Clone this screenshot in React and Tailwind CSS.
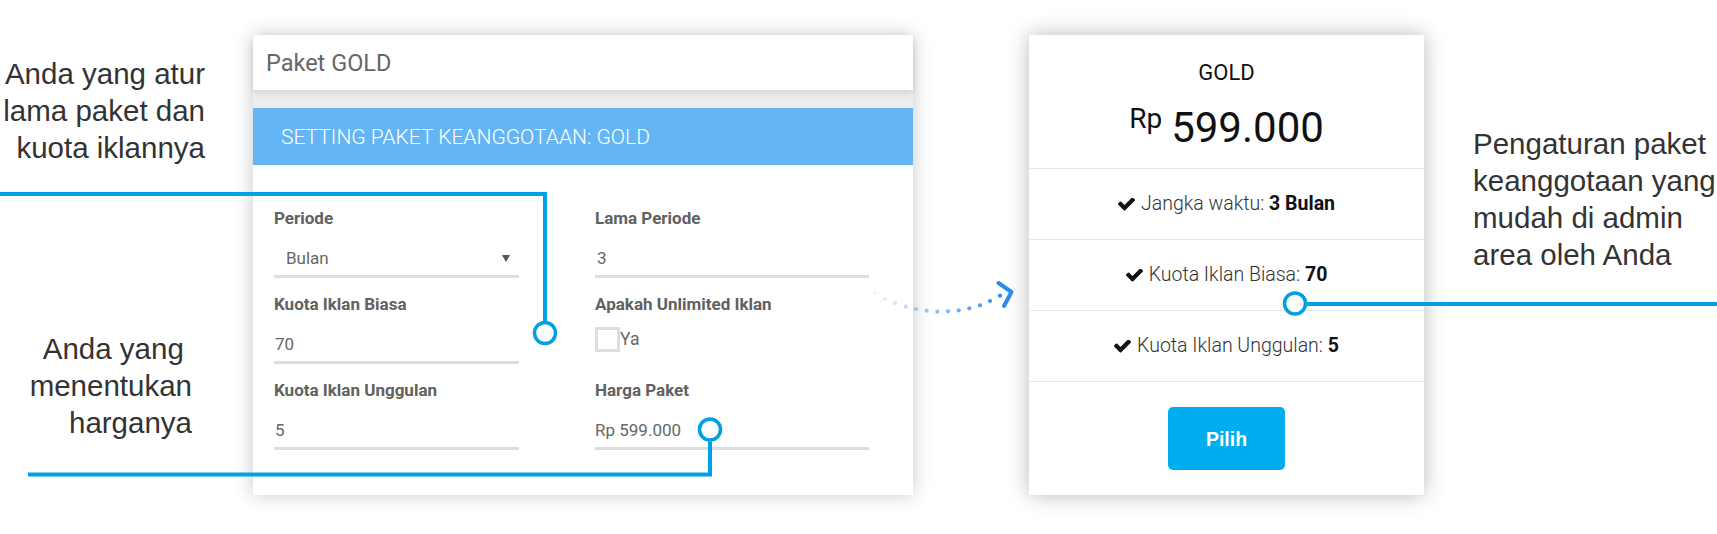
const lineBlue = '#00a0e6'
const arrowBlue = '#2a8cf0'

const arrowDots = [
  [875, 293.3], [885, 299], [895, 303], [905.7, 306.7], [916, 309], [926.7, 310.7],
  [937.3, 311.7], [948, 311.3], [958.7, 310.3], [969.3, 308.3], [980, 305.3], [990, 301], [1000, 295.7],
]

function Connectors() {
  return (
    <svg
      className="pointer-events-none absolute left-0 top-0"
      width="1717"
      height="534"
      viewBox="0 0 1717 534"
      fill="none"
    >
      <path d="M0 194H545V321" stroke={lineBlue} strokeWidth="4" />
      <circle cx="545" cy="333" r="10.5" fill="white" stroke={lineBlue} strokeWidth="3.5" />
      <path d="M28 474.5H710V441.5" stroke={lineBlue} strokeWidth="4" />
      <circle cx="710" cy="429.5" r="10.5" fill="white" stroke={lineBlue} strokeWidth="3.5" />
      <path d="M1307 304H1717" stroke={lineBlue} strokeWidth="4" />
      <circle cx="1295" cy="303.5" r="10.5" fill="white" stroke={lineBlue} strokeWidth="3.5" />
      {arrowDots.map(([x, y], i) => (
        <circle
          key={i}
          cx={x}
          cy={y}
          r="2.1"
          fill={arrowBlue}
          opacity={0.08 + (0.92 * i) / (arrowDots.length - 1)}
        />
      ))}
      <path
        d="M998.5 283L1011.5 292L1004 306"
        stroke={arrowBlue}
        strokeWidth="4"
        strokeLinecap="round"
        strokeLinejoin="round"
      />
    </svg>
  )
}

function CheckIcon() {
  return (
    <svg width="17" height="13" viewBox="121 410 1550 1130" className="shrink-0">
      <path
        fill="#111"
        d="M1671 566q0 40-28 68l-724 724-136 136q-28 28-68 28t-68-28l-136-136-362-362q-28-28-28-68t28-68l136-136q28-28 68-28t68 28l294 295 656-657q28-28 68-28t68 28l136 136q28 28 28 68z"
      />
    </svg>
  )
}

function Field({ label, children }) {
  return (
    <div className="mb-[16px] flex flex-col">
      <div className="h-[20px] text-[17px] font-bold leading-[20px] text-[#616161]">{label}</div>
      <div className="mt-[18px] h-[24px] text-[17px] leading-[24px] text-[#666]">{children}</div>
      <div className="mt-[5px] h-[3px] bg-[#dddddd]" />
    </div>
  )
}

function Feature({ label, value }) {
  return (
    <div className="flex h-[71px] items-center justify-center gap-[6px] border-b border-[#e8e8e8] text-[19.5px] font-light leading-[24px] text-[#333]">
      <CheckIcon />
      <span>
        {label} <span className="font-bold text-[#111]">{value}</span>
      </span>
    </div>
  )
}

function SettingsPanel() {
  return (
    <div className="mt-[35px] flex h-[460px] w-[660px] shrink-0 flex-col bg-[#eeeeee] font-[Roboto,sans-serif] shadow-[0_0_18px_rgba(0,0,0,0.22)]">
      <div className="relative z-10 flex h-[55px] items-center rounded-t-[2px] bg-white pl-[13px] text-[23.5px] leading-[28px] text-[#666] shadow-[0_3px_6px_rgba(0,0,0,0.12)]">
        Paket GOLD
      </div>
      <div className="h-[18px]" />
      <div className="flex h-[57px] items-center bg-[#64b5f6] pl-[28px] text-[21px] font-light leading-[26px] text-white">
        SETTING PAKET KEANGGOTAAN: GOLD
      </div>
      <div className="flex-1 bg-white pl-[21px] pt-[43px]">
        <div className="grid grid-cols-[245px_274px] gap-x-[76px]">
          <Field label="Periode">
            <div className="flex items-center justify-between pl-[12px] pr-[9px]">
              <span>Bulan</span>
              <svg width="8" height="7" viewBox="0 0 8 7">
                <path d="M0 0H8L4 7Z" fill="#555" />
              </svg>
            </div>
          </Field>
          <Field label="Lama Periode">
            <span className="pl-[2px]">3</span>
          </Field>
          <Field label="Kuota Iklan Biasa">
            <span className="pl-[1px]">70</span>
          </Field>
          <div className="mb-[16px] flex flex-col">
            <div className="h-[20px] text-[17px] font-bold leading-[20px] text-[#616161]">
              Apakah Unlimited Iklan
            </div>
            <div className="mt-[13px] flex h-[25px] items-center leading-[25px]">
              <div className="h-[25px] w-[25px] border-[3px] border-[#dddddd] bg-white" />
              <span className="text-[17.5px] text-[#666]">Ya</span>
            </div>
          </div>
          <Field label="Kuota Iklan Unggulan">
            <span className="pl-[1px]">5</span>
          </Field>
          <Field label="Harga Paket">Rp 599.000</Field>
        </div>
      </div>
    </div>
  )
}

function PriceCard() {
  return (
    <div className="ml-[116px] mt-[35px] flex h-[460px] w-[395px] shrink-0 flex-col bg-white font-[Roboto,sans-serif] shadow-[0_0_20px_rgba(0,0,0,0.28)]">
      <div className="flex h-[134px] flex-col items-center border-b border-[#e8e8e8] pt-[24.5px]">
        <div className="h-[26px] text-[22px] leading-[26px] text-[#111]">GOLD</div>
        <div className="mt-[17px] h-[50px] text-[42px] leading-[50px] text-[#111]">
          <span className="relative -top-[14px] mr-[9px] text-[28px] leading-none">Rp</span>
          599.000
        </div>
      </div>
      <Feature label="Jangka waktu:" value="3 Bulan" />
      <Feature label="Kuota Iklan Biasa:" value="70" />
      <Feature label="Kuota Iklan Unggulan:" value="5" />
      <div className="flex flex-1 justify-center pt-[25px]">
        <button
          type="button"
          className="h-[63px] w-[117px] rounded-[5px] bg-[#00aeef] font-['Liberation_Sans',Arial,sans-serif] text-[19.5px] font-bold leading-[24px] text-white"
        >
          Pilih
        </button>
      </div>
    </div>
  )
}

export default function App() {
  return (
    <div className="relative flex h-[534px] w-[1717px] overflow-hidden bg-white font-['Liberation_Sans',Arial,sans-serif] text-[29.5px] leading-[37px] text-[#333]">
      <div className="flex w-[253px] shrink-0 flex-col">
        <div className="mt-[54.6px] pr-[48px] text-right">
          Anda yang atur
          <br />
          lama paket dan
          <br />
          kuota iklannya
        </div>
        <div className="mt-[164px] pr-[61px] text-right">
          Anda yang{'\u00a0'}
          <br />
          menentukan
          <br />
          harganya
        </div>
      </div>

      <SettingsPanel />
      <PriceCard />

      <div className="ml-[49px] mt-[125.3px] shrink-0 whitespace-nowrap">
        Pengaturan paket
        <br />
        keanggotaan yang
        <br />
        mudah di admin
        <br />
        area oleh Anda
      </div>

      <Connectors />
    </div>
  )
}
